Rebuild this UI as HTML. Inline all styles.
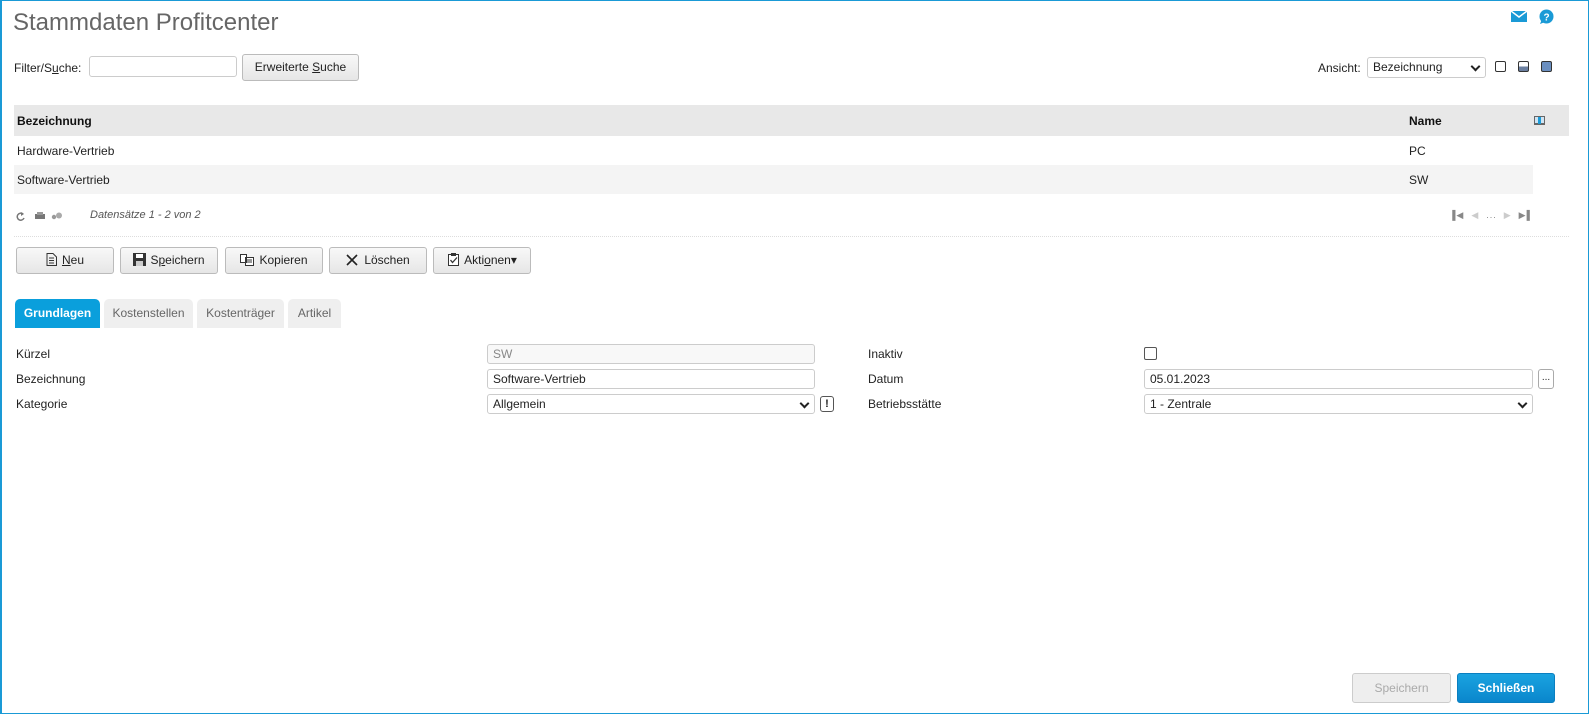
<!DOCTYPE html>
<html><head><meta charset="utf-8">
<style>
*{box-sizing:border-box}
body{margin:0;width:1592px;height:715px;background:#fff;font-family:"Liberation Sans",Arial,sans-serif;font-size:12px;color:#222;position:relative;overflow:hidden}
.frame{position:absolute;left:0;top:0;width:1589px;height:714px;border:1px solid #1a9ad6;border-left-width:2px}
.a{position:absolute}
.title{left:13px;top:9px;font-size:24px;color:#666}
.inp{position:absolute;border:1px solid #ccc;border-radius:3px;background:#fff;height:20px;padding:2px 5px;font-size:12px;line-height:14px}
.btn{position:absolute;border:1px solid #bbb;border-radius:3px;background:linear-gradient(#f8f8f8,#e6e6e6);font-size:12px;text-align:center;line-height:24px;color:#222}
.tab{position:absolute;top:299px;height:29px;background:#efefef;border-radius:5px 5px 0 0;color:#666;line-height:28px;text-align:center;font-size:12px}
.lbl{position:absolute;font-size:12px;color:#222}
.sel:after{content:"";position:absolute;right:6px;top:5px;width:5px;height:5px;border-right:2px solid #222;border-bottom:2px solid #222;transform:rotate(45deg)}
u{text-decoration:underline}
</style></head><body>
<div class="frame"></div>
<div class="a title">Stammdaten Profitcenter</div>
<svg class="a" style="left:1511px;top:11px" width="16" height="11"><rect width="16" height="11" fill="#1a9ad6"/><path d="M0 0 L8 6 L16 0" stroke="#fff" stroke-width="1.5" fill="none"/></svg>
<svg class="a" style="left:1538px;top:9px" width="16" height="16"><circle cx="8.5" cy="7.5" r="7" fill="#1a9ad6"/><path d="M2 15 L4 10 L7 13Z" fill="#1a9ad6"/><text x="8.5" y="11.5" font-size="10" font-weight="bold" fill="#fff" text-anchor="middle" font-family="Liberation Sans">?</text></svg>

<div class="lbl" style="left:14px;top:61px">Filter/S<u>u</u>che:</div>
<div class="inp" style="left:89px;top:56px;width:148px;height:21px"></div>
<div class="btn" style="left:242px;top:54px;width:117px;height:27px;line-height:25px">Erweiterte <u>S</u>uche</div>

<div class="lbl" style="left:1318px;top:61px">Ansicht:</div>
<div class="inp sel" style="left:1367px;top:57px;width:119px;height:21px;font-size:12px">Bezeichnung</div>
<div class="a" style="left:1495px;top:61px;width:11px;height:11px;border:1px solid #333;border-radius:2px;background:#fff"></div>
<div class="a" style="left:1518px;top:61px;width:11px;height:11px;border:1px solid #333;border-radius:2px;background:linear-gradient(#fff 50%,#6b7fa0 50%)"></div>
<div class="a" style="left:1541px;top:61px;width:11px;height:11px;border:1px solid #333;border-radius:2px;background:#6b8fc0"></div>

<div class="a" style="left:14px;top:105px;width:1555px;height:31px;background:#e8e8e8"></div>
<div class="lbl" style="left:17px;top:114px;font-weight:bold;color:#111">Bezeichnung</div>
<div class="lbl" style="left:1409px;top:114px;font-weight:bold;color:#111">Name</div>
<svg class="a" style="left:1534px;top:116px" width="11" height="9"><rect width="11" height="9" fill="#666"/><rect x="1" y="1" width="9" height="6" fill="#cfe3f2"/><rect x="4" y="1" width="3" height="7" fill="#1a9ad6"/></svg>
<div class="a" style="left:14px;top:165px;width:1519px;height:29px;background:#f4f4f4"></div>
<div class="lbl" style="left:17px;top:144px">Hardware-Vertrieb</div>
<div class="lbl" style="left:1409px;top:144px">PC</div>
<div class="lbl" style="left:17px;top:173px">Software-Vertrieb</div>
<div class="lbl" style="left:1409px;top:173px">SW</div>

<svg class="a" style="left:16px;top:211px" width="52" height="10"><path d="M7 3 A3.5 3.5 0 1 0 8 7" stroke="#777" stroke-width="1.5" fill="none"/><path d="M5 1 L8 3 L5 5Z" fill="#777"/><rect x="19" y="3" width="10" height="5" fill="#777"/><rect x="21" y="1" width="6" height="3" fill="#999"/><circle cx="38" cy="6" r="2.2" fill="#999"/><circle cx="43" cy="4.5" r="3" fill="#aaa"/></svg>
<div class="lbl" style="left:90px;top:209px;font-style:italic;color:#555;font-size:11px">Datensätze 1 - 2 von 2</div>
<div class="lbl" style="left:1449px;top:210px;color:#888;font-size:9px;letter-spacing:1px">▐◀ &nbsp;<span style="color:#ccc">◀</span> &nbsp;...&nbsp; <span style="color:#ccc">▶</span> &nbsp;▶▌</div>
<div class="a" style="left:14px;top:236px;width:1555px;border-top:1px dotted #ddd"></div>

<div class="btn" style="left:16px;top:247px;width:98px;height:27px"><svg width="11" height="13" style="vertical-align:-2px;margin-right:5px"><path d="M1 .5H7L10.5 4V12.5H1Z M3 5H8M3 7.5H8M3 10H8" stroke="#333" fill="none"/></svg><u>N</u>eu</div>
<div class="btn" style="left:120px;top:247px;width:98px;height:27px"><svg width="13" height="13" style="vertical-align:-2px;margin-right:4px"><rect width="13" height="13" fill="#333"/><rect x="3" y="1" width="7" height="4" fill="#fff"/><rect x="3" y="8" width="7" height="5" fill="#ccc"/></svg>S<u>p</u>eichern</div>
<div class="btn" style="left:225px;top:247px;width:98px;height:27px"><svg width="14" height="12" style="vertical-align:-2px;margin-right:5px"><path d="M.5 .5H6.5V8.5H.5Z M5.5 3.5H13.5V11.5H5.5Z M7 6H12M7 8H12" stroke="#333" fill="#fff"/></svg>Kopieren</div>
<div class="btn" style="left:329px;top:247px;width:98px;height:27px"><svg width="12" height="12" style="vertical-align:-2px;margin-right:6px"><path d="M1 1L11 11M11 1L1 11" stroke="#222" stroke-width="1.6"/></svg>Löschen</div>
<div class="btn" style="left:433px;top:247px;width:98px;height:27px"><svg width="13" height="14" style="vertical-align:-2px;margin-right:4px"><path d="M1.5 2.5H11.5V13.5H1.5Z" stroke="#333" fill="#fff"/><rect x="4" y="1" width="5" height="3" fill="#333"/><path d="M3.5 8L5.5 10.5L10 5.5" stroke="#333" fill="none" stroke-width="1.3"/></svg>Akti<u>o</u>nen▾</div>

<div class="tab" style="left:15px;width:85px;background:#0a9fdc;color:#fff;font-weight:bold">Grundlagen</div>
<div class="tab" style="left:104px;width:89px">Kostenstellen</div>
<div class="tab" style="left:197px;width:87px">Kostenträger</div>
<div class="tab" style="left:288px;width:53px">Artikel</div>

<div class="lbl" style="left:16px;top:347px">Kürzel</div>
<div class="lbl" style="left:16px;top:372px">Bezeichnung</div>
<div class="lbl" style="left:16px;top:397px">Kategorie</div>
<div class="inp" style="left:487px;top:344px;width:328px;background:#f8f8f8;color:#888">SW</div>
<div class="inp" style="left:487px;top:369px;width:328px">Software-Vertrieb</div>
<div class="inp sel" style="left:487px;top:394px;width:328px">Allgemein</div>
<div class="a" style="left:820px;top:396px;width:14px;height:16px;border:1px solid #555;border-radius:3px;text-align:center;font-weight:bold;font-size:11px;line-height:14px">!</div>

<div class="lbl" style="left:868px;top:347px">Inaktiv</div>
<div class="lbl" style="left:868px;top:372px">Datum</div>
<div class="lbl" style="left:868px;top:397px">Betriebsstätte</div>
<div class="a" style="left:1144px;top:347px;width:13px;height:13px;border:1px solid #555;border-radius:2px"></div>
<div class="inp" style="left:1144px;top:369px;width:389px">05.01.2023</div>
<div class="a" style="left:1538px;top:369px;width:16px;height:20px;border:1px solid #aaa;border-radius:3px;font-size:10px;text-align:center;line-height:16px">...</div>
<div class="inp sel" style="left:1144px;top:394px;width:389px">1 - Zentrale</div>

<div class="btn" style="left:1352px;top:673px;width:99px;height:30px;line-height:28px;color:#aaa;background:#eee;border-color:#ccc">Speichern</div>
<div class="btn" style="left:1457px;top:673px;width:98px;height:30px;line-height:28px;color:#fff;font-weight:bold;background:linear-gradient(#1aa3e0,#0a86cc);border-color:#0a7fc0">Schließen</div>
</body></html>
